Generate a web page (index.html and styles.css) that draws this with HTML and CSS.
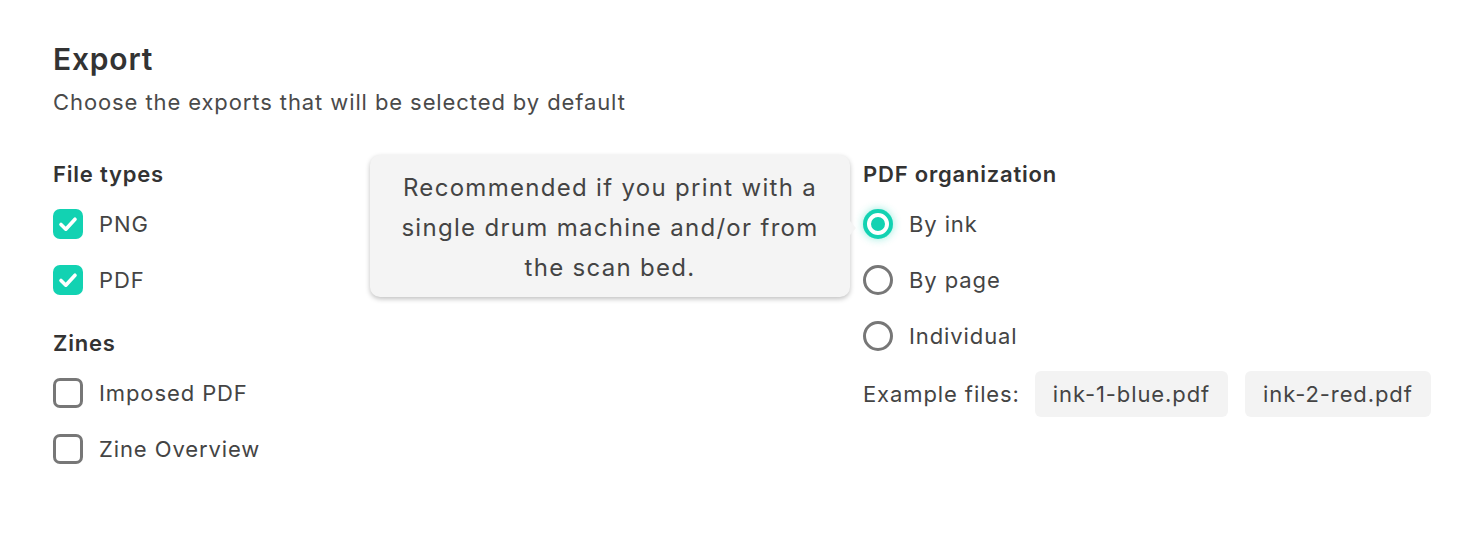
FILE: index.html
```html
<!DOCTYPE html>
<html lang="en">
<head>
<meta charset="utf-8">
<title>Export</title>
<link rel="stylesheet" href="styles.css">
</head>
<body>
<div class="page">
  <h1 class="title">Export</h1>
  <p class="subtitle">Choose the exports that will be selected by default</p>
  <div class="columns">
    <div class="col">
      <div class="group-title">File types</div>
      <div class="option"><span class="checkbox checked"><svg viewBox="0 0 30 30" width="30" height="30"><path d="M8 15.5 L12.8 20.2 L22 10.2" fill="none" stroke="#fff" stroke-width="3.6" stroke-linecap="round" stroke-linejoin="round"/></svg></span><span class="label">PNG</span></div>
      <div class="option"><span class="checkbox checked"><svg viewBox="0 0 30 30" width="30" height="30"><path d="M8 15.5 L12.8 20.2 L22 10.2" fill="none" stroke="#fff" stroke-width="3.6" stroke-linecap="round" stroke-linejoin="round"/></svg></span><span class="label">PDF</span></div>
      <div class="group-title second">Zines</div>
      <div class="option"><span class="checkbox"></span><span class="label">Imposed PDF</span></div>
      <div class="option"><span class="checkbox"></span><span class="label">Zine Overview</span></div>
    </div>
    <div class="col">
      <div class="group-title">PDF organization</div>
      <div class="option"><span class="radio checked"></span><span class="label">By ink</span></div>
      <div class="option"><span class="radio"></span><span class="label">By page</span></div>
      <div class="option"><span class="radio"></span><span class="label">Individual</span></div>
      <div class="examples">
        <span class="examples-label">Example files:</span>
        <span class="chip">ink-1-blue.pdf</span>
        <span class="chip">ink-2-red.pdf</span>
      </div>
    </div>
  </div>
  <div class="tooltip">Recommended if you print with a single drum machine and/or from the scan bed.</div>
</div>
</body>
</html>
```
FILE: styles.css
```css
* { box-sizing: border-box; }
html, body { margin: 0; padding: 0; background: #fff; }
body {
  font-family: Inter, "Noto Sans", "Liberation Sans", sans-serif;
  color: #444;
  width: 1472px;
  height: 534px;
  overflow: hidden;
}
.page {
  position: relative;
  padding: 42px 0 0 53px;
}
.title {
  margin: 0;
  font-size: 30px;
  line-height: 34px;
  font-weight: 600;
  color: #333;
  letter-spacing: 0.8px;
}
.subtitle {
  margin: 12px 0 0;
  font-size: 22px;
  line-height: 28px;
  color: #4a4a4a;
  letter-spacing: 0.9px;
}
.columns {
  margin-top: 44px;
  display: grid;
  grid-template-columns: 810px 1fr;
}
.group-title {
  font-size: 22px;
  line-height: 28px;
  font-weight: 600;
  color: #333;
  letter-spacing: 0.8px;
  margin-bottom: 8px;
}
.group-title.second { margin-top: 21px; }
.option {
  height: 56px;
  display: flex;
  align-items: center;
  gap: 16px;
}
.label {
  font-size: 22px;
  line-height: 28px;
  color: #444;
  letter-spacing: 0.9px;
}
.checkbox {
  width: 30px;
  height: 30px;
  border: 3px solid #777;
  border-radius: 7px;
  flex: none;
  display: block;
}
.checkbox.checked {
  border: none;
  background: #12d2b2;
}
.checkbox svg { display: block; }
.radio {
  width: 30px;
  height: 30px;
  border: 3px solid #777;
  border-radius: 50%;
  flex: none;
}
.radio.checked {
  border: none;
  background: #12d2b2;
  box-shadow: inset 0 0 0 4px #12d2b2, inset 0 0 0 8px #fff, 0 0 8px rgba(18, 210, 178, 0.45);
}
.examples {
  margin-top: 7px;
  display: flex;
  align-items: center;
}
.examples-label {
  font-size: 22px;
  line-height: 28px;
  color: #444;
  letter-spacing: 0.9px;
  margin-right: 15px;
}
.chip {
  height: 46px;
  display: flex;
  align-items: center;
  padding: 0 18px;
  background: #f3f3f3;
  border-radius: 6px;
  font-size: 22px;
  letter-spacing: 0.9px;
  color: #444;
  margin-right: 17px;
}
.tooltip {
  position: absolute;
  left: 370px;
  top: 155px;
  width: 480px;
  height: 142px;
  padding: 13px 16px 9px;
  background: #f4f4f4;
  border-radius: 10px;
  box-shadow: 0 2px 5px rgba(0, 0, 0, 0.25);
  font-size: 24px;
  line-height: 40px;
  letter-spacing: 1.3px;
  text-align: center;
  color: #444;
}
.tooltip::after {
  content: "";
  position: absolute;
  right: -6px;
  top: 66px;
  border-top: 7px solid transparent;
  border-bottom: 7px solid transparent;
  border-left: 6px solid #f4f4f4;
}
```
